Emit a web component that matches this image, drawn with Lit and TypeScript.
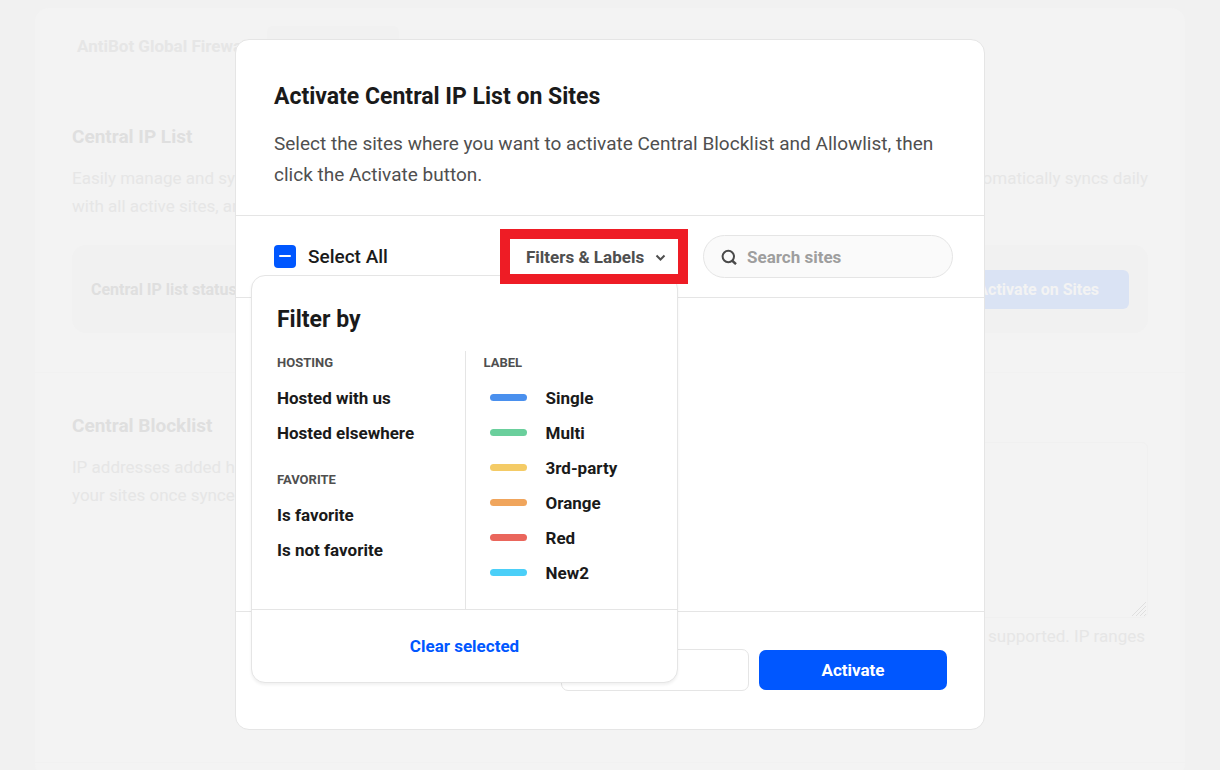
import { LitElement, html, css } from "lit";
import { customElement, property, state } from "lit/decorators.js";

const base = css`
  * {
    box-sizing: border-box;
  }
  h1,
  h2,
  h3,
  p,
  ul {
    margin: 0;
    padding: 0;
  }
  button,
  input,
  textarea {
    font: inherit;
    color: inherit;
    margin: 0;
  }
  button {
    border: 0;
    padding: 0;
    background: none;
    cursor: pointer;
  }
`;

interface Label {
  name: string;
  color: string;
}

const LABELS: Label[] = [
  { name: "Single", color: "#4a90ee" },
  { name: "Multi", color: "#6acf9c" },
  { name: "3rd-party", color: "#f4cb66" },
  { name: "Orange", color: "#f0a55c" },
  { name: "Red", color: "#ea665c" },
  { name: "New2", color: "#4bcff8" },
];

/* Firewall settings shown dimmed behind the dialog. */
@customElement("firewall-settings")
export class FirewallSettings extends LitElement {
  static styles = [
    base,
    css`
      :host {
        display: block;
        padding: 8px 35px 0;
        color: #e6e6e6;
        font-size: 16px;
        line-height: 28px;
      }
      .panel {
        min-height: 100vh;
        background: #f3f3f3;
        border-radius: 14px;
      }
      .bar {
        display: flex;
        align-items: flex-start;
        gap: 16px;
        padding: 18px 42px 0;
        height: 76px;
      }
      .bar-title {
        flex: none;
        width: 174px;
        padding-top: 6px;
        font-weight: 700;
        font-size: 17px;
        white-space: nowrap;
      }
      .bar-field {
        width: 132px;
        height: 40px;
        border-radius: 6px;
        background: #f1f1f1;
      }
      .section {
        padding: 39px 37px;
        border-bottom: 1px solid #f1f1f1;
      }
      .title {
        color: #dfdfdf;
        font-size: 19px;
        font-weight: 700;
        line-height: 28px;
      }
      .copy {
        margin-top: 13px;
      }
      .copy,
      .hint {
        font-size: 17px;
        line-height: 28px;
      }
      .line {
        display: flex;
        justify-content: space-between;
      }
      .status {
        display: flex;
        align-items: center;
        justify-content: space-between;
        margin-top: 25px;
        padding: 25px 19px 24px;
        border-radius: 14px;
        background: #f1f1f1;
        font-weight: 700;
        color: #dfdfdf;
      }
      .sync {
        height: 39px;
        padding: 0 30px;
        border-radius: 6px;
        background: #dae3f4;
        color: #f3f3f3;
        font-size: 16px;
        font-weight: 700;
      }
      .columns {
        display: grid;
        grid-template-columns: 1fr 2fr;
        gap: 60px;
      }
      .field {
        position: relative;
        margin-top: 30px;
      }
      .list {
        display: block;
        width: 100%;
        height: 176px;
        border: 1px solid #f0f0f0;
        border-radius: 6px;
        background: transparent;
        resize: none;
      }
      .grip {
        position: absolute;
        right: 2px;
        bottom: 2px;
      }
      .hint {
        margin-top: 4px;
        padding-right: 3px;
        text-align: right;
      }
      .block {
        height: 390px;
      }
    `,
  ];

  render() {
    return html`
      <div class="panel">
        <div class="bar">
          <div class="bar-title">AntiBot Global Firewall</div>
          <div class="bar-field"></div>
        </div>
        <section class="section">
          <h2 class="title">Central IP List</h2>
          <div class="copy">
            <p class="line"><span>Easily manage and sync</span><span>automatically syncs daily</span></p>
            <p>with all active sites, and</p>
          </div>
          <div class="status">
            <span>Central IP list status</span>
            <button class="sync" type="button">Activate on Sites</button>
          </div>
        </section>
        <section class="section block columns">
          <div>
            <h2 class="title">Central Blocklist</h2>
            <div class="copy">
              <p>IP addresses added here</p>
              <p>your sites once synced</p>
            </div>
          </div>
          <div>
            <div class="field">
              <textarea class="list" aria-label="Central Blocklist"></textarea>
              <svg class="grip" width="14" height="14" viewBox="0 0 14 14" fill="none" stroke="#dfdfdf" aria-hidden="true">
                <path d="M0 14 14 0M4 14 14 4M8 14l6-6M12 14l2-2" />
              </svg>
            </div>
            <p class="hint">are supported. IP ranges</p>
          </div>
        </section>
      </div>
    `;
  }
}

@customElement("filter-menu")
export class FilterMenu extends LitElement {
  @property({ attribute: false }) labels: Label[] = [];

  static styles = [
    base,
    css`
      :host {
        display: block;
        border: 1px solid #e5e5e5;
        border-radius: 14px;
        background: #fff;
        box-shadow: 0 2px 3px rgba(0, 0, 0, 0.06);
        color: #1a1a1a;
      }
      .heading {
        padding: 28px 25px 0;
        font-size: 23px;
        font-weight: 700;
        line-height: 32px;
      }
      .columns {
        display: grid;
        grid-template-columns: 1fr 1fr;
        margin-top: 15px;
        border-bottom: 1px solid #e5e5e5;
      }
      .column {
        padding: 0 25px 19px;
      }
      .column + .column {
        padding: 0 18px 19px;
        border-left: 1px solid #e5e5e5;
      }
      .group + .group {
        margin-top: 18px;
      }
      .caption {
        padding-bottom: 5px;
        color: #4f4f4f;
        font-size: 13px;
        font-weight: 700;
        line-height: 24px;
        text-transform: uppercase;
      }
      .options {
        list-style: none;
      }
      .option {
        display: flex;
        align-items: center;
        gap: 19px;
        width: 100%;
        height: 35px;
        font-size: 17px;
        font-weight: 700;
        text-align: left;
      }
      .tagged {
        padding-left: 6px;
      }
      .swatch {
        width: 37px;
        height: 7px;
        border-radius: 4px;
      }
      .foot {
        display: grid;
        place-items: center;
        height: 72px;
      }
      .clear {
        color: #0057ff;
        font-size: 17px;
        font-weight: 700;
      }
    `,
  ];

  private group(caption: string, options: string[]) {
    return html`
      <div class="group">
        <h3 class="caption">${caption}</h3>
        <ul class="options">
          ${options.map((o) => html`<li><button class="option" type="button">${o}</button></li>`)}
        </ul>
      </div>
    `;
  }

  render() {
    return html`
      <h2 class="heading">Filter by</h2>
      <div class="columns">
        <div class="column">
          ${this.group("Hosting", ["Hosted with us", "Hosted elsewhere"])}
          ${this.group("Favorite", ["Is favorite", "Is not favorite"])}
        </div>
        <div class="column">
          <h3 class="caption">Label</h3>
          <ul class="options">
            ${this.labels.map(
              (l) => html`
                <li>
                  <button class="option tagged" type="button">
                    <span class="swatch" style="background:${l.color}"></span>${l.name}
                  </button>
                </li>
              `
            )}
          </ul>
        </div>
      </div>
      <div class="foot"><button class="clear" type="button">Clear selected</button></div>
    `;
  }
}

@customElement("activate-dialog")
export class ActivateDialog extends LitElement {
  @state() private open = true;

  static styles = [
    base,
    css`
      :host {
        display: block;
        width: 100%;
        max-width: 750px;
        border: 1px solid #e5e5e5;
        border-radius: 14px;
        background: #fff;
        color: #1a1a1a;
      }
      .head {
        padding: 39px 37px 25px 38px;
        border-bottom: 1px solid #e5e5e5;
      }
      .title {
        font-size: 23px;
        font-weight: 700;
        line-height: 36px;
      }
      .lead {
        margin-top: 13px;
        color: #4f4f4f;
        font-size: 19px;
        line-height: 31px;
      }
      .toolbar {
        position: relative;
        display: flex;
        align-items: center;
        height: 82px;
        padding: 0 31px 0 38px;
        border-bottom: 1px solid #e5e5e5;
      }
      .all {
        display: flex;
        align-items: center;
        gap: 12px;
        margin-right: auto;
        font-size: 19px;
        font-weight: 500;
      }
      .tick {
        appearance: none;
        display: grid;
        justify-content: center;
        width: 22px;
        height: 23px;
        padding-top: 10px;
        border-radius: 4px;
        background: #0057ff;
      }
      .tick::before {
        content: "";
        width: 12px;
        height: 2px;
        border-radius: 1px;
        background: #fff;
      }
      .filters {
        position: relative;
        z-index: 2;
        display: flex;
        align-items: center;
        justify-content: space-between;
        width: 188px;
        height: 55px;
        margin-right: 15px;
        padding: 0 12px 0 16px;
        border: 10px solid #ee1c25;
        background: #fff;
        color: #4f4f4f;
        font-size: 17px;
        font-weight: 700;
        white-space: nowrap;
      }
      .search {
        display: flex;
        align-items: center;
        gap: 10px;
        width: 250px;
        height: 43px;
        padding: 0 17px;
        border: 1px solid #e5e5e5;
        border-radius: 22px;
        background: #fafafa;
      }
      .search svg {
        flex: none;
      }
      .query {
        flex: 1;
        min-width: 0;
        padding: 0;
        border: 0;
        outline: 0;
        background: none;
        font-size: 17px;
        font-weight: 700;
      }
      .query::placeholder {
        color: #9e9e9e;
        opacity: 1;
      }
      .menu {
        position: absolute;
        z-index: 1;
        top: 59px;
        left: 15px;
        width: 427px;
      }
      .sites {
        min-height: 313px;
      }
      .foot {
        display: flex;
        align-items: center;
        justify-content: flex-end;
        gap: 10px;
        padding: 37px 37px 38px;
        border-top: 1px solid #e5e5e5;
        font-size: 17px;
        font-weight: 700;
      }
      .close,
      .activate {
        width: 188px;
        height: 40px;
        border-radius: 7px;
      }
      .close {
        height: 42px;
        border: 1px solid #e5e5e5;
      }
      .activate {
        background: #0057ff;
        color: #fff;
      }
    `,
  ];

  render() {
    return html`
      <header class="head">
        <h1 class="title">Activate Central IP List on Sites</h1>
        <p class="lead">
          Select the sites where you want to activate Central Blocklist and Allowlist, then click the Activate button.
        </p>
      </header>
      <div class="toolbar">
        <label class="all"><input class="tick" type="checkbox" .indeterminate=${true} />Select All</label>
        <button class="filters" type="button" aria-expanded=${this.open} @click=${() => (this.open = !this.open)}>
          Filters &amp; Labels
          <svg width="11" height="8" viewBox="0 0 11 8" fill="none" stroke="#4f4f4f" stroke-width="2" aria-hidden="true">
            <path d="M1.5 2.5l4 4 4-4" />
          </svg>
        </button>
        <label class="search">
          <svg width="16" height="16" viewBox="0 0 16 16" fill="none" stroke="#4a4a4a" stroke-width="2" aria-hidden="true">
            <circle cx="7.3" cy="7.5" r="5.7" />
            <path d="M11 11.5l4 3.7" stroke-width="2.4" />
          </svg>
          <input class="query" type="search" placeholder="Search sites" aria-label="Search sites" />
        </label>
        ${this.open ? html`<filter-menu class="menu" .labels=${LABELS}></filter-menu>` : null}
      </div>
      <div class="sites"></div>
      <footer class="foot">
        <button class="close" type="button">Close</button>
        <button class="activate" type="button">Activate</button>
      </footer>
    `;
  }
}

@customElement("app-root")
export class AppRoot extends LitElement {
  static styles = [
    base,
    css`
      :host {
        display: block;
        position: relative;
        height: 100vh;
        overflow: hidden;
        background: #f1f1f1;
        font-family: Roboto, sans-serif;
      }
      .overlay {
        position: absolute;
        inset: 0;
        display: flex;
        align-items: flex-start;
        justify-content: center;
        padding: 39px 20px;
        overflow: auto;
      }
    `,
  ];

  render() {
    return html`
      <firewall-settings></firewall-settings>
      <div class="overlay" role="dialog" aria-modal="true"><activate-dialog></activate-dialog></div>
    `;
  }
}
